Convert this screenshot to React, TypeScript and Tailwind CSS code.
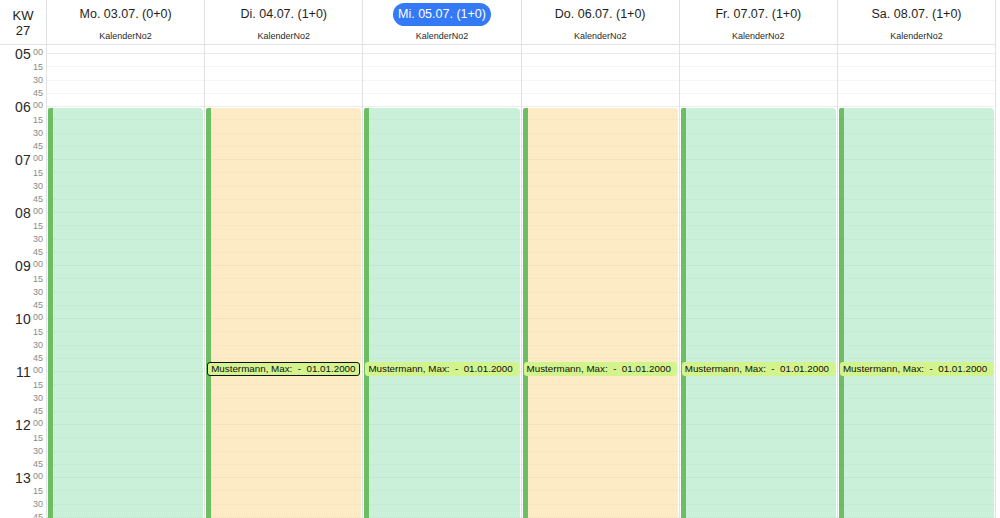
import React from "react"

type Day = { title: string; kind: "green" | "yellow"; today?: boolean; selected?: boolean }

const days: Day[] = [
  { title: "Mo. 03.07. (0+0)", kind: "green" },
  { title: "Di. 04.07. (1+0)", kind: "yellow", selected: true },
  { title: "Mi. 05.07. (1+0)", kind: "green", today: true },
  { title: "Do. 06.07. (1+0)", kind: "yellow" },
  { title: "Fr. 07.07. (1+0)", kind: "green" },
  { title: "Sa. 08.07. (1+0)", kind: "green" },
]

const hours = [5, 6, 7, 8, 9, 10, 11, 12, 13]
const slots = hours.flatMap((h) => [0, 15, 30, 45].map((m) => ({ h, m })))

function pad(n: number) {
  return n < 10 ? "0" + n : "" + n
}

function Gutter() {
  return (
    <div className="w-[47px] shrink-0 border-r border-[#e2e2e2] flex flex-col">
      <div className="h-[45px] shrink-0 border-b border-[#e2e2e2] flex flex-col items-center justify-center pt-[1px] text-[13px] leading-[15px] text-[#222]">
        <span>KW</span>
        <span>27</span>
      </div>
      <div className="pt-[2.375px]">
        {slots.map(({ h, m }) => (
          <div key={h + "-" + m} className="h-[13.25px] flex items-center justify-end pr-[3px]">
            {m === 0 ? (
              <div className="flex items-start">
                <span className="text-[14px] leading-[14px] font-medium text-[#2a2a2a] tracking-[0.2px]">{pad(h)}</span>
                <span className="ml-[2px] mt-[1px] text-[9px] leading-[9px] text-[#8a8a8a]">00</span>
              </div>
            ) : (
              <span className="text-[9px] leading-[9px] text-[#8a8a8a]">{m}</span>
            )}
          </div>
        ))}
      </div>
    </div>
  )
}

function Column({ day }: { day: Day }) {
  const fill = day.kind === "green" ? "bg-[rgba(150,225,180,0.5)]" : "bg-[rgba(249,215,137,0.5)]"
  return (
    <div className="w-[158.2px] shrink-0 border-r border-[#e2e2e2] flex flex-col">
      <div className="h-[45px] shrink-0 border-b border-[#e2e2e2] flex flex-col items-center pt-[3px]">
        <div
          className={
            day.today
              ? "h-[23px] px-[5px] rounded-full bg-[#3479f6] text-white text-[12.5px] leading-[23px]"
              : "h-[23px] text-[12.5px] leading-[23px] text-[#1e1e1e]"
          }
        >
          {day.title}
        </div>
        <div className="mt-[4px] text-[9px] leading-[12px] text-[#2a2a2a]">KalenderNo2</div>
      </div>
      <div className="h-[9px] shrink-0 border-b border-[#ebebeb]" />
      <div className="relative">
        {slots.map(({ h, m }) => (
          <div
            key={h + "-" + m}
            className={
              m === 45
                ? "h-[13.25px] border-b border-[#ececec]"
                : "h-[13.25px] border-b border-dotted border-[#ededed]"
            }
          />
        ))}
        <div className={"absolute left-[1px] right-[1px] top-[54px] bottom-0 rounded-tr-[4px] rounded-tl-[2px] flex " + fill}>
          <div className="w-[5px] bg-[#6cbd63] rounded-tl-[2px]" />
        </div>
        {day.title.indexOf("(0+0)") === -1 && (
          <div
            className={
              "absolute left-[2px] right-[2px] top-[308px] h-[14px] rounded-[3px] bg-[#d3f38d] text-[9.8px] leading-[12px] text-[#111] whitespace-pre pl-[3px] flex items-center " +
              (day.selected ? "border border-[#111]" : "")
            }
          >
            {"Mustermann, Max:  -  01.01.2000"}
          </div>
        )}
      </div>
    </div>
  )
}

export default function App() {
  return (
    <div className="h-[518px] w-[1000px] overflow-hidden bg-white flex font-['Liberation_Sans',Arial,sans-serif]">
      <Gutter />
      {days.map((d) => (
        <Column key={d.title} day={d} />
      ))}
    </div>
  )
}
